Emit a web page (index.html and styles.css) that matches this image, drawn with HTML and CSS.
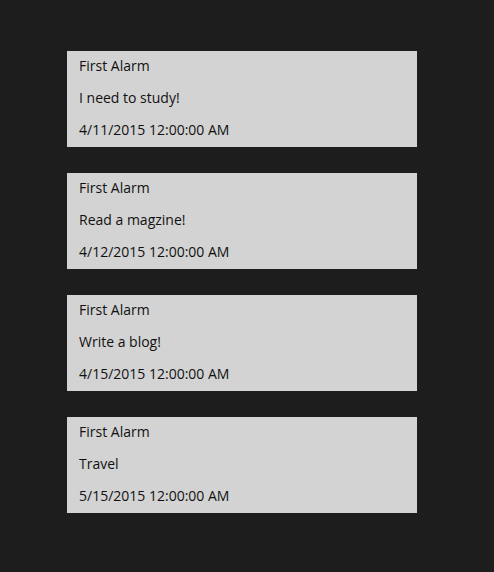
FILE: index.html
```html
<!DOCTYPE html>
<html>
<head>
<meta charset="utf-8">
<link rel="stylesheet" href="styles.css">
</head>
<body>
<div class="list">
  <div class="card">
    <div class="line">First Alarm</div>
    <div class="line">I need to study!</div>
    <div class="line">4/11/2015 12:00:00 AM</div>
  </div>
  <div class="card">
    <div class="line">First Alarm</div>
    <div class="line">Read a magzine!</div>
    <div class="line">4/12/2015 12:00:00 AM</div>
  </div>
  <div class="card">
    <div class="line">First Alarm</div>
    <div class="line">Write a blog!</div>
    <div class="line">4/15/2015 12:00:00 AM</div>
  </div>
  <div class="card">
    <div class="line">First Alarm</div>
    <div class="line">Travel</div>
    <div class="line">5/15/2015 12:00:00 AM</div>
  </div>
</div>
</body>
</html>
```
FILE: styles.css
```css
html, body {
  margin: 0;
  padding: 0;
  background: #1d1d1d;
  height: 100%;
}
body {
  font-family: "Open Sans", "Noto Sans", "Liberation Sans", sans-serif;
  font-size: 14px;
  color: #111;
}
.list {
  display: flex;
  flex-direction: column;
  gap: 26px;
  padding: 51px 0 0 67px;
}
.card {
  width: 338px;
  height: 96px;
  padding-left: 12px;
  background: #d3d3d3;
  display: flex;
  flex-direction: column;
}
.line {
  height: 32px;
  line-height: 29px;
}
```
